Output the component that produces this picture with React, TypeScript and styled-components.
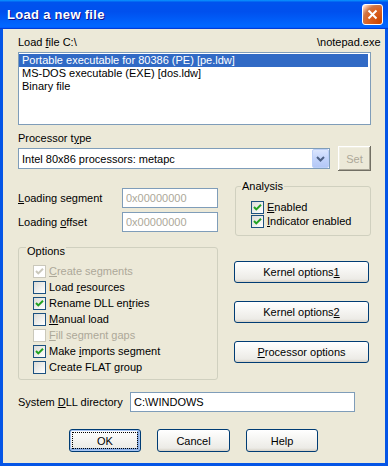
import React from "react";
import styled, { createGlobalStyle, css } from "styled-components";

const GlobalStyle = createGlobalStyle`
  html, body {
    margin: 0;
    padding: 0;
    background: #fff;
  }
  body {
    font-family: "Liberation Sans", Arial, sans-serif;
    font-size: 11px;
    color: #000;
  }
  * {
    box-sizing: border-box;
  }
`;

const Window = styled.div`
  width: 388px;
  height: 466px;
  display: flex;
  flex-direction: column;
  overflow: hidden;
`;

const TitleBar = styled.div`
  height: 29px;
  flex: none;
  display: flex;
  align-items: center;
  justify-content: space-between;
  padding: 0 5px 0 7px;
  background: linear-gradient(
    180deg,
    #0997ff 0%,
    #0053ee 8%,
    #0050ee 40%,
    #0066ff 88%,
    #0066ff 93%,
    #005bff 95%,
    #003dd7 96%,
    #003dd7 100%
  );
`;

const Title = styled.span`
  color: #fff;
  font-weight: bold;
  font-size: 13px;
  letter-spacing: 0.3px;
  text-shadow: 1px 1px #0f1089;
`;

const CloseButton = styled.div`
  width: 21px;
  height: 21px;
  border: 1px solid #fff;
  border-radius: 3px;
  display: flex;
  align-items: center;
  justify-content: center;
  background: radial-gradient(
    circle at 90% 90%,
    #cc4600 0%,
    #dc6527 55%,
    #cd7546 70%,
    #ffccb2 90%,
    #fff 100%
  );
`;

const Frame = styled.div`
  flex: 1;
  display: flex;
  flex-direction: column;
  background: #ece9d8;
  border: 3px solid #0555e6;
  border-top: 0;
  padding: 7px 14px 0 15px;
`;

const HeaderRow = styled.div`
  display: flex;
  height: 13px;
  line-height: 13px;
  margin-right: -14px;
  white-space: nowrap;
`;

const FileLabel = styled.span`
  flex: 1;
`;

const FileTail = styled.span`
  width: 68px;
`;

const ListBox = styled.div`
  margin-top: 3px;
  height: 73px;
  border: 1px solid #7f9db9;
  background: #fff;
  padding: 1px 2px 0 0;
`;

const ListItem = styled.div<{ $selected?: boolean }>`
  height: 13px;
  line-height: 13px;
  padding-left: 3px;
  white-space: nowrap;
  ${(p) =>
    p.$selected &&
    css`
      background: #316ac5;
      color: #fff;
    `}
`;

const FieldLabel = styled.div`
  margin-top: 7px;
  line-height: 13px;
`;

const ComboRow = styled.div`
  display: flex;
  align-items: center;
  height: 25px;
  margin-top: 1px;
`;

const Combo = styled.div`
  width: 312px;
  height: 21px;
  border: 1px solid #7f9db9;
  background: #fff;
  display: flex;
  align-items: center;
  padding-left: 3px;
`;

const ComboText = styled.span`
  flex: 1;
`;

const ComboButton = styled.div`
  width: 17px;
  height: 19px;
  display: flex;
  align-items: center;
  justify-content: center;
  border: 1px solid #bcd0f8;
  border-radius: 2px;
  background: linear-gradient(180deg, #dbe6fe 0%, #c3d4fb 50%, #b4c8f6 100%);
`;

const ClassicButton = styled.div`
  margin-left: 8px;
  width: 33px;
  height: 25px;
  display: flex;
  align-items: center;
  justify-content: center;
  background: #ece9d8;
  color: #aca899;
  box-shadow: inset -1px -1px #716f64, inset 1px 1px #fff,
    inset -2px -2px #aca899, inset 2px 2px #f1efe2;
`;

const MidRow = styled.div`
  display: flex;
  align-items: flex-start;
  gap: 17px;
  margin-top: 15px;
`;

const FieldColumn = styled.div`
  width: 200px;
  display: flex;
  flex-direction: column;
  gap: 4px;
  padding-top: 2px;
`;

const FieldRow = styled.div`
  display: flex;
  align-items: center;
  height: 20px;
`;

const FieldName = styled.span<{ $width: number }>`
  width: ${(p) => p.$width}px;
  flex: none;
`;

const TextInput = styled.input<{ $width: number; $muted?: boolean }>`
  width: ${(p) => p.$width}px;
  height: 20px;
  border: 1px solid #7f9db9;
  background: #fff;
  padding: 0 0 0 3px;
  margin: 0;
  font-family: "Liberation Sans", Arial, sans-serif;
  font-size: 11px;
  color: ${(p) => (p.$muted ? "#aca899" : "#000")};
  outline: none;
`;

const GroupBox = styled.div<{ $width: number; $bottom: number }>`
  width: ${(p) => p.$width}px;
  flex: none;
  border: 1px solid #d0d0bf;
  border-radius: 3px;
  padding-bottom: ${(p) => p.$bottom}px;
`;

const GroupTitle = styled.div<{ $lift: number; $indent: number }>`
  width: fit-content;
  margin: -${(p) => p.$lift}px 0 0 ${(p) => p.$indent}px;
  padding: 0 1px;
  line-height: 13px;
  background: #ece9d8;
`;

const CheckList = styled.div<{ $gap: number; $indent: number }>`
  margin-top: ${(p) => p.$gap}px;
  padding-left: ${(p) => p.$indent}px;
`;

const CheckRow = styled.div<{ $height: number; $disabled?: boolean }>`
  display: flex;
  align-items: center;
  gap: 3px;
  height: ${(p) => p.$height}px;
  white-space: nowrap;
  color: ${(p) => (p.$disabled ? "#aca899" : "#000")};
`;

const Box = styled.span<{ $disabled?: boolean }>`
  width: 13px;
  height: 13px;
  flex: none;
  display: flex;
  align-items: center;
  justify-content: center;
  border: 1px solid ${(p) => (p.$disabled ? "#cac8bb" : "#1c5180")};
  background: ${(p) =>
    p.$disabled ? "#fff" : "linear-gradient(135deg, #dcdcd7 0%, #fff 100%)"};
`;

const BottomRow = styled.div`
  display: flex;
  align-items: flex-start;
  gap: 16px;
  margin-top: 11px;
`;

const ButtonColumn = styled.div`
  width: 135px;
  margin-top: 14px;
  display: flex;
  flex-direction: column;
  gap: 18px;
`;

const XpButton = styled.div<{ $width?: number; $default?: boolean }>`
  width: ${(p) => (p.$width ? `${p.$width}px` : "100%")};
  height: ${(p) => (p.$default !== undefined ? 23 : 22)}px;
  display: flex;
  align-items: center;
  justify-content: center;
  border: 1px solid #003c74;
  border-radius: 3px;
  background: linear-gradient(180deg, #fff 0%, #ecebe6 86%, #d6d0c5 100%);
  white-space: nowrap;
  ${(p) =>
    p.$default &&
    css`
      box-shadow: inset 0 0 0 1px #a9c6f3, inset -1px -1px 0 2px #89ade4;
      outline: 1px dotted #000;
      outline-offset: -4px;
    `}
`;

const DllRow = styled.div`
  display: flex;
  align-items: center;
  height: 20px;
  margin-top: 12px;
`;

const DialogButtons = styled.div`
  display: flex;
  gap: 16px;
  margin-top: 17px;
  padding-left: 51px;
`;

const Check = ({ on, disabled }: { on?: boolean; disabled?: boolean }) => (
  <Box $disabled={disabled}>
    {on && (
      <svg width="9" height="9" viewBox="0 0 9 9">
        <path
          d="M1 4 L3.3 6.4 L8 1.8"
          fill="none"
          stroke={disabled ? "#cac8bb" : "#21a121"}
          strokeWidth="2"
        />
      </svg>
    )}
  </Box>
);

type Opt = { pre: string; key: string; post: string; on?: boolean; disabled?: boolean };

const options: Opt[] = [
  { pre: "", key: "C", post: "reate segments", on: true, disabled: true },
  { pre: "Load ", key: "r", post: "esources" },
  { pre: "Rename DLL en", key: "t", post: "ries", on: true },
  { pre: "", key: "M", post: "anual load" },
  { pre: "", key: "F", post: "ill segment gaps", disabled: true },
  { pre: "Make ", key: "i", post: "mports segment", on: true },
  { pre: "Create FLAT ", key: "g", post: "roup" },
];

const App = () => (
  <>
    <GlobalStyle />
    <Window>
      <TitleBar>
        <Title>Load a new file</Title>
        <CloseButton>
          <svg width="13" height="13" viewBox="0 0 13 13">
            <path d="M2.5 2.5 L10.5 10.5 M10.5 2.5 L2.5 10.5" stroke="#fff" strokeWidth="2" />
          </svg>
        </CloseButton>
      </TitleBar>
      <Frame>
        <HeaderRow>
          <FileLabel>
            Load <u>f</u>ile C:\
          </FileLabel>
          <FileTail>\notepad.exe</FileTail>
        </HeaderRow>
        <ListBox>
          <ListItem $selected>Portable executable for 80386 (PE) [pe.ldw]</ListItem>
          <ListItem>MS-DOS executable (EXE) [dos.ldw]</ListItem>
          <ListItem>Binary file</ListItem>
        </ListBox>

        <FieldLabel>
          Processor t<u>y</u>pe
        </FieldLabel>
        <ComboRow>
          <Combo>
            <ComboText>Intel 80x86 processors: metapc</ComboText>
            <ComboButton>
              <svg width="9" height="6" viewBox="0 0 9 6">
                <path d="M1 1 L4.5 4.5 L8 1" fill="none" stroke="#4d6185" strokeWidth="2" />
              </svg>
            </ComboButton>
          </Combo>
          <ClassicButton>Set</ClassicButton>
        </ComboRow>

        <MidRow>
          <FieldColumn>
            <FieldRow>
              <FieldName $width={104}>
                <u>L</u>oading segment
              </FieldName>
              <TextInput $width={96} $muted readOnly value="0x00000000" />
            </FieldRow>
            <FieldRow>
              <FieldName $width={104}>
                Loading <u>o</u>ffset
              </FieldName>
              <TextInput $width={96} $muted readOnly value="0x00000000" />
            </FieldRow>
          </FieldColumn>
          <GroupBox $width={136} $bottom={7}>
            <GroupTitle $lift={7} $indent={5}>
              Analysis
            </GroupTitle>
            <CheckList $gap={7} $indent={15}>
              <CheckRow $height={14}>
                <Check on />
                <span>
                  <u>E</u>nabled
                </span>
              </CheckRow>
              <CheckRow $height={14}>
                <Check on />
                <span>
                  <u>I</u>ndicator enabled
                </span>
              </CheckRow>
            </CheckList>
          </GroupBox>
        </MidRow>

        <BottomRow>
          <GroupBox $width={200} $bottom={4}>
            <GroupTitle $lift={3} $indent={7}>
              Options
            </GroupTitle>
            <CheckList $gap={5} $indent={14}>
              {options.map((o) => (
                <CheckRow key={o.pre + o.key + o.post} $height={16} $disabled={o.disabled}>
                  <Check on={o.on} disabled={o.disabled} />
                  <span>
                    {o.pre}
                    <u>{o.key}</u>
                    {o.post}
                  </span>
                </CheckRow>
              ))}
            </CheckList>
          </GroupBox>
          <ButtonColumn>
            <XpButton>
              Kernel options<u>1</u>
            </XpButton>
            <XpButton>
              Kernel options<u>2</u>
            </XpButton>
            <XpButton>
              <u>P</u>rocessor options
            </XpButton>
          </ButtonColumn>
        </BottomRow>

        <DllRow>
          <FieldName $width={112}>
            System <u>D</u>LL directory
          </FieldName>
          <TextInput $width={225} readOnly value="C:\WINDOWS" />
        </DllRow>

        <DialogButtons>
          <XpButton $width={72} $default>
            OK
          </XpButton>
          <XpButton $width={73} $default={false}>
            Cancel
          </XpButton>
          <XpButton $width={72} $default={false}>
            Help
          </XpButton>
        </DialogButtons>
      </Frame>
    </Window>
  </>
);

export default App;
